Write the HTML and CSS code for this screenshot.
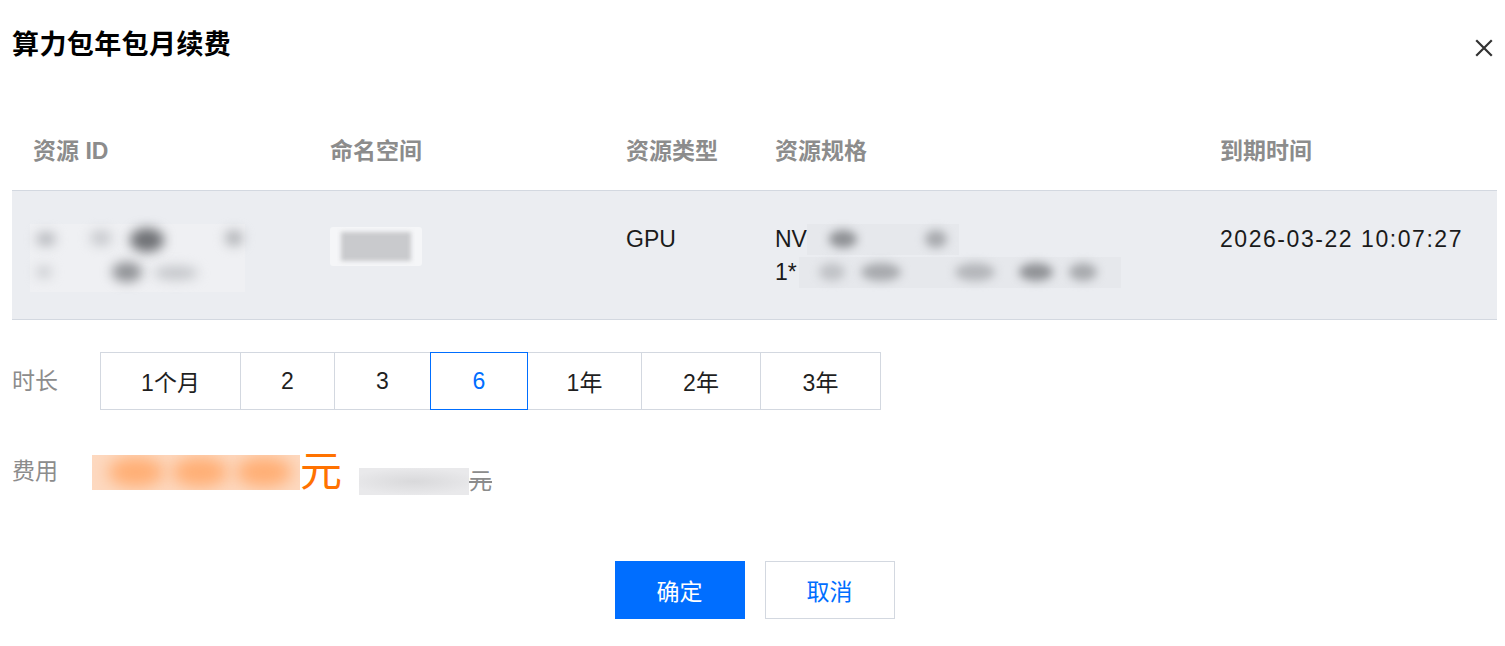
FILE: index.html
```html
<!DOCTYPE html>
<html lang="zh">
<head>
<meta charset="utf-8">
<title>算力包年包月续费</title>
<link rel="stylesheet" href="styles.css">
</head>
<body>
<div class="dialog">
  <div class="dialog-header">
    <div class="title">算力包年包月续费</div>
    <button class="close" aria-label="关闭">
      <svg width="18" height="18" viewBox="0 0 18 18"><path d="M2 2 L16 16 M16 2 L2 16" stroke="#333" stroke-width="2.2" stroke-linecap="square" fill="none"/></svg>
    </button>
  </div>

  <div class="table">
    <div class="row head">
      <div class="cell">资源 ID</div>
      <div class="cell">命名空间</div>
      <div class="cell">资源类型</div>
      <div class="cell">资源规格</div>
      <div class="cell">到期时间</div>
    </div>
    <div class="row body">
      <div class="cell">
        <div class="blur-id">
          <span class="spot s1"></span><span class="spot s2"></span><span class="spot s3"></span><span class="spot s4"></span>
          <span class="spot s5"></span><span class="spot s6"></span><span class="spot s7"></span>
        </div>
      </div>
      <div class="cell">
        <div class="ns-tag"><span class="ns-blur"></span></div>
      </div>
      <div class="cell">GPU</div>
      <div class="cell">
        <div class="spec-line">NV<span class="blur-spec w1"><span class="dot d1"></span><span class="dot d2"></span></span></div>
        <div class="spec-line">1*<span class="blur-spec w2"><span class="dot d3"></span><span class="dot d4"></span><span class="dot d5"></span><span class="dot d6"></span><span class="dot d7"></span></span></div>
      </div>
      <div class="cell date">2026-03-22 10:07:27</div>
    </div>
  </div>

  <div class="form-row duration">
    <div class="label">时长</div>
    <div class="segmented">
      <button class="seg">1个月</button>
      <button class="seg">2</button>
      <button class="seg">3</button>
      <button class="seg active">6</button>
      <button class="seg">1年</button>
      <button class="seg">2年</button>
      <button class="seg">3年</button>
    </div>
  </div>

  <div class="form-row fee">
    <div class="label">费用</div>
    <div class="price-blur"><span class="o1"></span><span class="o2"></span><span class="o3"></span></div>
    <div class="price-unit">元</div>
    <div class="orig-blur"></div>
    <div class="orig-unit">元</div>
  </div>

  <div class="actions">
    <button class="btn primary">确定</button>
    <button class="btn">取消</button>
  </div>
</div>
</body>
</html>
```

FILE: styles.css
```css
* { box-sizing: border-box; }
html, body { margin: 0; padding: 0; background: #fff; }
body {
  font-family: "Liberation Sans", "Noto Sans CJK SC", sans-serif;
  color: #1f1f1f;
  width: 1505px;
  height: 646px;
  overflow: hidden;
}
.dialog { padding: 27px 8px 0 12px; }
.dialog-header {
  display: flex;
  justify-content: space-between;
  align-items: center;
  height: 36px;
}
.title {
  font-size: 27px;
  line-height: 36px;
  font-weight: 700;
  color: #000;
  letter-spacing: 0.4px;
}
.close {
  border: 0;
  background: none;
  padding: 0;
  margin: 6px 4px 0 0;
  width: 18px;
  height: 18px;
  display: flex;
}

.table { margin-top: 51px; }
.row {
  display: grid;
  grid-template-columns: 297px 296px 149px 445px 1fr;
}
.row.head {
  border-bottom: 1px solid #d3d8e0;
  color: #8c8c8c;
  font-weight: 700;
  padding: 21px 0 22px;
}
.row.head .cell { font-size: 23px; line-height: 33px; }
.row.body {
  background: #ebedf1;
  border-bottom: 1px solid #d3d8e0;
  height: 129px;
  padding-top: 32px;
}
.cell {
  padding-left: 21px;
  font-size: 23px;
  line-height: 33px;
}
.row.body .cell { color: #1a1a1a; }
.date { letter-spacing: 1.55px; }

.blur-id {
  position: relative;
  width: 215px;
  height: 68px;
  margin: 1px 0 0 -3px;
  background: #eff0f3;
}
.spot { position: absolute; border-radius: 50%; background: #b5b7bc; filter: blur(6px); }
.s1 { left: 6px; top: 8px; width: 20px; height: 14px; }
.s2 { left: 60px; top: 6px; width: 22px; height: 16px; background: #c8cace; }
.s3 { left: 100px; top: 4px; width: 34px; height: 24px; background: #6f7175; }
.s4 { left: 195px; top: 6px; width: 18px; height: 16px; background: #b0b2b6; }
.s5 { left: 6px; top: 42px; width: 16px; height: 12px; background: #c9cbcf; }
.s6 { left: 82px; top: 38px; width: 30px; height: 20px; background: #8f9195; }
.s7 { left: 124px; top: 42px; width: 44px; height: 14px; background: #c4c6ca; }

.ns-tag {
  width: 92px;
  height: 39px;
  margin-top: 4px;
  background: #f5f6f8;
  border-radius: 3px;
  padding: 5px 11px;
}
.ns-blur {
  display: block;
  height: 29px;
  background: #c9cacd;
  filter: blur(2px);
}

.spec-line { display: flex; align-items: center; white-space: nowrap; }
.blur-spec {
  position: relative;
  display: inline-block;
  height: 31px;
  background: #e6e8ec;
}
.w1 { width: 152px; }
.w2 { width: 322px; margin-left: 2px; }
.dot {
  position: absolute;
  top: 6px;
  height: 18px;
  border-radius: 50%;
  background: #a7a9ad;
  filter: blur(5px);
}
.d1 { left: 22px; width: 28px; background: #8e9094; }
.d2 { left: 118px; width: 22px; }
.d3 { left: 20px; width: 26px; background: #c0c2c6; }
.d4 { left: 62px; width: 40px; }
.d5 { left: 156px; width: 40px; background: #b4b6ba; }
.d6 { left: 220px; width: 34px; background: #8f9195; }
.d7 { left: 270px; width: 28px; }

.form-row { display: flex; }
.label {
  width: 88px;
  font-size: 23px;
  line-height: 33px;
  color: #8c8c8c;
  flex: none;
}
.duration { margin-top: 32px; align-items: center; }
.segmented { display: flex; }
.seg {
  height: 58px;
  padding: 0;
  white-space: nowrap;
  border: 1px solid #d3d8e0;
  margin-left: -1px;
  background: #fff;
  font-family: "Liberation Sans", "Noto Sans CJK SC", sans-serif;
  font-size: 23px;
  color: #1f1f1f;
  position: relative;
}
.seg:first-child { margin-left: 0; width: 141px; }
.seg:nth-child(2) { width: 95px; }
.seg:nth-child(3) { width: 97px; }
.seg:nth-child(4) { width: 98px; }
.seg:nth-child(5) { width: 115px; }
.seg:nth-child(6) { width: 120px; }
.seg:nth-child(7) { width: 121px; }
.seg.active {
  border-color: #006eff;
  color: #006eff;
  z-index: 1;
}

.fee { margin-top: 45px; align-items: flex-start; }
.fee .label { width: 80px; }
.price-blur {
  position: relative;
  width: 208px;
  height: 35px;
  background: #fdd9c0;
  overflow: hidden;
}
.price-blur span {
  position: absolute;
  top: 2px;
  height: 30px;
  width: 56px;
  border-radius: 50%;
  background: #ffae74;
  filter: blur(8px);
}
.o1 { left: 16px; }
.o2 { left: 80px; }
.o3 { left: 144px; }
.price-unit {
  font-size: 42px;
  line-height: 42px;
  color: #ff7200;
  margin-top: -4px;
}
.orig-blur {
  width: 110px;
  height: 27px;
  margin: 13px 0 0 17px;
  background: radial-gradient(ellipse 60% 50% at 50% 50%, #d9d9db, #e9e9eb);
}
.orig-unit {
  font-size: 23px;
  line-height: 33px;
  color: #8c8c8c;
  margin-top: 10px;
  text-decoration: line-through;
}

.actions {
  display: flex;
  justify-content: center;
  gap: 20px;
  margin-top: 63px;
}
.btn {
  width: 130px;
  height: 58px;
  border: 1px solid #d3d8e0;
  background: #fff;
  color: #006eff;
  font-family: "Liberation Sans", "Noto Sans CJK SC", sans-serif;
  font-size: 23px;
}
.btn.primary {
  background: #006eff;
  border-color: #006eff;
  color: #fff;
}
```
